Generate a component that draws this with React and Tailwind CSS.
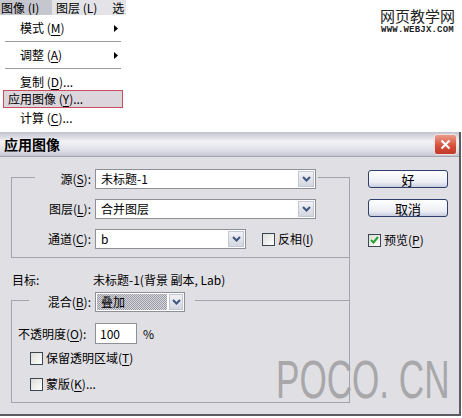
import React from 'react';

const U = ({ children }) => <span className="underline underline-offset-[2px]">{children}</span>;

function Chevron() {
  return (
    <svg width="9" height="6" viewBox="0 0 9 6">
      <path d="M1 1l3.5 3.5L8 1" fill="none" stroke="#3f5580" strokeWidth="2" />
    </svg>
  );
}

function Select({ className, children, dither }) {
  return (
    <div className={`flex h-[20px] border border-[#8f9097] bg-white ${className}`}>
      <div className="flex flex-1 items-center px-[1px]">
        <div
          className={`flex h-[16px] items-center px-[4px] ${
            dither
              ? 'w-[70px] bg-[conic-gradient(#9c9ca6_25%,#d6d6dc_0_50%,#9c9ca6_0_75%,#d6d6dc_0)] bg-[length:2px_2px]'
              : ''
          }`}
        >
          {children}
        </div>
      </div>
      <div className="m-[1px] flex w-[16px] items-center justify-center border border-[#c4c8d4] bg-[linear-gradient(to_bottom,#f2f2f6,#d4d6e0)]">
        <Chevron />
      </div>
    </div>
  );
}

function Check({ checked }) {
  return (
    <span className="flex h-[13px] w-[13px] items-center justify-center border border-[#3d4650] bg-[linear-gradient(135deg,#dcdcd8,#ffffff)]">
      {checked && (
        <svg width="9" height="8" viewBox="0 0 9 8">
          <path d="M1 4l2.5 2.5L8 1" fill="none" stroke="#22a22a" strokeWidth="2" />
        </svg>
      )}
    </span>
  );
}

function Button({ children, className }) {
  return (
    <div
      className={`flex h-[18px] w-[80px] items-center justify-center rounded-[3px] border border-[#2e3f6e] bg-[linear-gradient(to_bottom,#ffffff,#eceef4_70%,#c8cce0)] text-[13px] ${className}`}
    >
      {children}
    </div>
  );
}

function MenuArrow() {
  return (
    <svg width="4" height="7" viewBox="0 0 4 7">
      <path d="M0 0l4 3.5L0 7z" fill="#000" />
    </svg>
  );
}

export default function App() {
  return (
    <div className="relative h-[418px] w-[462px] overflow-hidden bg-white font-['Noto_Sans_CJK_SC',sans-serif] text-[12px] leading-none text-black">
      {/* menu + site mark */}
      <div className="flex h-[132px]">
        <div className="flex w-[126px] flex-col">
          <div className="flex h-[15px] items-center overflow-hidden bg-[#e4e4e8]">
            <div className="flex h-full w-[52px] shrink-0 items-center pl-[1px] bg-[#c6c6ce]">图像 (<U>I</U>)</div>
            <div className="ml-[4px] shrink-0">图层 (<U>L</U>)</div>
            <div className="ml-[15px] shrink-0">选</div>
          </div>
          <div className="mt-[5px] flex h-[16px] items-center justify-between pl-[20px] pr-[8px]">
            <span>模式 (<U>M</U>)</span>
            <MenuArrow />
          </div>
          <div className="mx-[5px] mt-[5px] h-[1px] bg-[#9c9ca0]" />
          <div className="mt-[5px] flex h-[16px] items-center justify-between pl-[20px] pr-[8px]">
            <span>调整 (<U>A</U>)</span>
            <MenuArrow />
          </div>
          <div className="mx-[5px] mt-[5px] h-[1px] bg-[#9c9ca0]" />
          <div className="mt-[5px] flex h-[16px] items-center pl-[20px]">
            复制 (<U>D</U>)...
          </div>
          <div className="ml-[3px] flex h-[18px] w-[120px] items-center border border-[#c8505e] bg-[#dcd6dc] pl-[4px]">
            应用图像 (<U>Y</U>)...
          </div>
          <div className="mt-[2px] flex h-[16px] items-center pl-[20px]">
            计算 (<U>C</U>)...
          </div>
        </div>
        <div className="ml-[254px] mt-[8px] flex flex-col items-center">
          <div className="text-[15px] text-[#222]">网页教学网</div>
          <div className="mt-[3px] font-['Liberation_Mono',monospace] text-[9px] font-bold tracking-[0.2px] text-[#222]">
            WWW.WEBJX.COM
          </div>
        </div>
      </div>

      {/* dialog */}
      <div className="flex h-[284px] w-[461px] flex-col border-b-2 border-r-2 border-[#5a5a60] bg-[#e0dfe4]">
        <div className="flex h-[25px] items-center justify-between border-b border-[#a4a4b0] bg-[linear-gradient(to_bottom,#c2c2ce,#f2f2f6_40%,#dcdce4_80%,#c6c6d2)] pl-[4px] pr-[2px]">
          <span className="text-[14px] font-bold">应用图像</span>
          <div className="flex h-[21px] w-[23px] items-center justify-center rounded-[3px] border border-[#f0e0e0] bg-[linear-gradient(to_bottom,#ec9a88,#d44c38_60%,#c03a2c)]">
            <svg width="11" height="11" viewBox="0 0 11 11">
              <path d="M1.5 1.5l8 8M9.5 1.5l-8 8" stroke="#fff" strokeWidth="2.2" />
            </svg>
          </div>
        </div>

        <div className="flex">
          {/* left */}
          <div className="w-[350px]">
            <div className="ml-[11px] mt-[20px] h-[226px] w-[339px] border-r border-[#a4a4ac]">
              <div className="h-[81px] border-b border-l border-t border-[#a4a4ac]">
                <div className="-mt-[9px] ml-[23px] flex h-[20px] w-[283px] items-center bg-[#e0dfe4]">
                  <span className="w-[56px] text-right">源(<U>S</U>):</span>
                  <Select className="ml-[4px] w-[221px]">未标题-1</Select>
                </div>
                <div className="ml-[23px] mt-[10px] flex h-[20px] items-center">
                  <span className="w-[56px] text-right">图层(<U>L</U>):</span>
                  <Select className="ml-[4px] w-[221px]">合并图层</Select>
                </div>
                <div className="ml-[23px] mt-[10px] flex h-[20px] items-center">
                  <span className="w-[56px] text-right">通道(<U>C</U>):</span>
                  <Select className="ml-[4px] w-[151px]">b</Select>
                  <div className="ml-[16px] flex items-center gap-[3px]">
                    <Check />
                    <span>反相(<U>I</U>)</span>
                  </div>
                </div>
              </div>

              <div className="mt-[14px] flex h-[16px] items-center pl-[1px]">
                <span className="w-[81px]">目标:</span>
                <span>未标题-1(背景 副本, Lab)</span>
              </div>

              <div className="mt-[12px] h-[103px] border-b border-l border-t border-[#a4a4ac]">
                <div className="-mt-[9px] ml-[17px] flex h-[20px] w-[166px] items-center bg-[#e0dfe4]">
                  <span className="w-[62px] text-right">混合(<U>B</U>):</span>
                  <Select className="ml-[4px] w-[90px]" dither>
                    叠加
                  </Select>
                </div>
                <div className="ml-[6px] mt-[11px] flex h-[21px] items-center">
                  <span className="w-[77px]">不透明度(<U>O</U>):</span>
                  <div className="flex h-[21px] w-[42px] items-center border border-[#8f9097] bg-white pl-[4px]">100</div>
                  <span className="ml-[6px]">%</span>
                </div>
                <div className="ml-[18px] mt-[7px] flex h-[14px] items-center gap-[3px]">
                  <Check />
                  <span>保留透明区域(<U>T</U>)</span>
                </div>
                <div className="ml-[18px] mt-[12px] flex h-[14px] items-center gap-[3px]">
                  <Check />
                  <span>蒙版(<U>K</U>)...</span>
                </div>
              </div>
            </div>
          </div>

          {/* right */}
          <div className="ml-[18px] mt-[13px] flex flex-col">
            <Button>好</Button>
            <Button className="mt-[11px]">取消</Button>
            <div className="mt-[16px] flex h-[14px] items-center gap-[3px]">
              <Check checked />
              <span>预览(<U>P</U>)</span>
            </div>
          </div>
        </div>
      </div>

      {/* watermark */}
      <div className="pointer-events-none absolute left-[276px] top-[352px] origin-left scale-x-[0.65] whitespace-nowrap font-['Liberation_Sans',sans-serif] text-[54px] leading-none text-[#a2a2a4] opacity-90">
        POCO. CN
      </div>
    </div>
  );
}
